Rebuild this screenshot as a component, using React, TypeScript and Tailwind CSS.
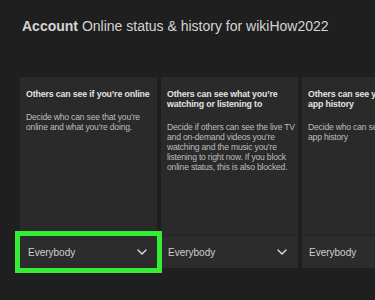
import { ChevronDown } from "lucide-react";

type Setting = {
  title: string;
  description: string;
  value: string;
};

const settings: Setting[] = [
  {
    title: "Others can see if you’re online",
    description: "Decide who can see that you’re online and what you’re doing.",
    value: "Everybody",
  },
  {
    title: "Others can see what you’re watching or listening to",
    description:
      "Decide if others can see the live TV and on-demand videos you’re watching and the music you’re listening to right now. If you block online status, this is also blocked.",
    value: "Everybody",
  },
  {
    title: "Others can see your game and app history",
    description: "Decide who can see your game and app history",
    value: "Everybody",
  },
];

export default function App() {
  return (
    <main
      className="h-[300px] w-[375px] overflow-hidden bg-[#1f1f1f] text-[#d6d6d6]"
      style={{ fontFamily: '"Liberation Sans", Arial, sans-serif' }}
    >
      <h1 className="whitespace-nowrap pl-[22px] pt-[17px] text-[14px] leading-[18px] text-[#d4d4d4]">
        <span className="font-bold">Account</span> Online status &amp; history for wikiHow2022
      </h1>

      <div className="mt-[42px] flex gap-[4px] pl-[20px]">
        {settings.map((s, i) => (
          <div key={i} className="flex w-[137px] shrink-0 flex-col">
            <div className="h-[158px] overflow-hidden bg-[#2a2a2a] pl-[6px] pr-0 pt-[12px]">
              <h2 className="text-[8.8px] font-bold leading-[10px] tracking-[-0.15px] text-[#e2e2e2]">
                {s.title}
              </h2>
              <p className="mt-[13px] text-[8.6px] leading-[10px] tracking-[-0.2px] text-[#bdbdbd]">
                {s.description}
              </p>
            </div>
            <div className="h-[1px] bg-[#232323]" />
            <div
              className={
                i === 0
                  ? "relative flex h-[32px] items-center justify-between bg-[#2c2c2c] pl-[8px] pr-[7px] outline outline-[5px] outline-[#33ee33]"
                  : "flex h-[32px] items-center justify-between bg-[#2c2c2c] pl-[7px] pr-[8px]"
              }
            >
              <span className="text-[10px] text-[#cfcfcf]">{s.value}</span>
              <ChevronDown className="h-[16px] w-[16px] text-[#e0e0e0]" strokeWidth={2} />
            </div>
          </div>
        ))}
      </div>
    </main>
  );
}
